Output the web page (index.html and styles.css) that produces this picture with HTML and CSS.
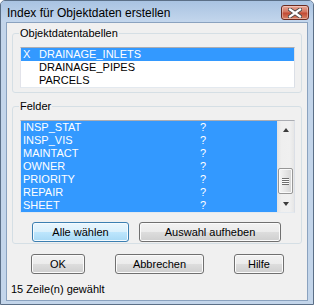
FILE: index.html
```html
<!DOCTYPE html>
<html>
<head>
<meta charset="utf-8">
<title>Index für Objektdaten erstellen</title>
<link rel="stylesheet" href="styles.css">
</head>
<body>
<div class="window">
	<div class="titlebar">
		<span class="title">Index für Objektdaten erstellen</span>
		<span class="close">
			<svg width="14" height="10" viewBox="0 0 14 10">
				<path d="M2 1.5 L12 8.5 M12 1.5 L2 8.5" stroke="#4a4a4a" stroke-width="4" stroke-linecap="square"/>
				<path d="M2 1.5 L12 8.5 M12 1.5 L2 8.5" stroke="#fff" stroke-width="2.2" stroke-linecap="square"/>
			</svg>
		</span>
	</div>
	<div class="client">
		<fieldset class="group">
			<legend>Objektdatentabellen</legend>
			<ul class="listbox tables">
				<li class="selected"><span class="mark">X</span>DRAINAGE_INLETS</li>
				<li><span class="mark"></span>DRAINAGE_PIPES</li>
				<li><span class="mark"></span>PARCELS</li>
			</ul>
		</fieldset>

		<fieldset class="group fields">
			<legend>Felder</legend>
			<div class="listbox field-box">
				<ul class="field-list">
					<li class="selected"><span class="name">INSP_STAT</span><span>?</span></li>
					<li class="selected"><span class="name">INSP_VIS</span><span>?</span></li>
					<li class="selected"><span class="name">MAINTACT</span><span>?</span></li>
					<li class="selected"><span class="name">OWNER</span><span>?</span></li>
					<li class="selected"><span class="name">PRIORITY</span><span>?</span></li>
					<li class="selected"><span class="name">REPAIR</span><span>?</span></li>
					<li class="selected"><span class="name">SHEET</span><span>?</span></li>
				</ul>
				<div class="scrollbar">
					<div class="sb-btn up"></div>
					<div class="sb-track"><div class="sb-thumb" style="margin-top:30px"><span class="grip"></span></div></div>
					<div class="sb-btn down"></div>
				</div>
			</div>
			<div class="group-buttons">
				<button class="btn focus select-all">Alle wählen</button>
				<button class="btn clear-all">Auswahl aufheben</button>
			</div>
		</fieldset>

		<div class="dialog-buttons">
			<button class="btn ok">OK</button>
			<button class="btn cancel">Abbrechen</button>
			<button class="btn help">Hilfe</button>
		</div>
		<div class="status">15 Zeile(n) gewählt</div>
	</div>
</div>
</body>
</html>
```

FILE: styles.css
```css
body{
margin:0;
font-family:"Liberation Sans", Arial, sans-serif;
font-size:11px;
color:#000;
background:#fff;
}
.window{
width:314px;
height:305px;
box-sizing:border-box;
border:1px solid #5b6f87;
border-radius:5px 5px 0 0;
background:#c3d5ea;
overflow:hidden;
}
.titlebar{
height:21px;
display:flex;
justify-content:space-between;
align-items:flex-start;
background:linear-gradient(#a9c3e2, #c3d6ec);
}
.title{
font-size:12px;
line-height:14px;
padding:5px 0 0 6px;
white-space:nowrap;
}
.close{
box-sizing:border-box;
width:28px;
height:15px;
margin:4px 4px 0 0;
display:flex;
align-items:center;
justify-content:center;
border:1px solid #6b2b20;
border-radius:3px;
background:linear-gradient(#e9a899, #d3755f 45%, #c24a33 55%, #d88266);
box-shadow:inset 0 0 0 1px rgba(255,255,255,0.35);
}
.client{
height:279px;
margin:0 5px;
box-sizing:border-box;
border:1px solid #8aa2bf;
background:#f0f0f0;
}
.group{
margin:4px 5px 0;
padding:7px 6px 4px 7px;
border:1px solid #d5dfe5;
border-radius:3px;
min-width:0;
}
.group legend{
padding:0 1px;
margin-left:-1px;
line-height:13px;
}
.fields{
margin-top:7px;
padding-bottom:1px;
}
.listbox{
margin:0;
padding:0;
list-style:none;
background:#fff;
border:1px solid #e3e9ef;
border-top-color:#abadb3;
border-left-color:#e2e3ea;
border-right-color:#dbdfe6;
}
.listbox li,
.field-list li{
height:13px;
line-height:13px;
padding-left:2px;
display:flex;
white-space:nowrap;
}
.selected{
background:#3399ff;
color:#fff;
}
.mark{
width:16px;
}
.field-box{
display:flex;
}
.field-list{
flex:1;
margin:0;
padding:0;
list-style:none;
}
.field-list .name{
width:177px;
}
.scrollbar{
width:17px;
display:flex;
flex-direction:column;
background:linear-gradient(to right, #e2e2e2, #efefef 25%, #f0f0f0 75%, #e6e6e6);
}
.sb-btn{
height:17px;
display:flex;
align-items:center;
justify-content:center;
}
.sb-btn.up::before{
content:"";
border-left:3.5px solid transparent;
border-right:3.5px solid transparent;
border-bottom:4px solid #3c3c3c;
}
.sb-btn.down::before{
content:"";
border-left:3.5px solid transparent;
border-right:3.5px solid transparent;
border-top:4px solid #3c3c3c;
}
.sb-track{
flex:1;
}
.sb-thumb{
box-sizing:border-box;
height:26px;
margin:0 1px;
display:flex;
align-items:center;
justify-content:center;
border:1px solid #979797;
border-radius:2px;
background:linear-gradient(to right, #f5f5f5, #e6e6e6 50%, #d4d4d4);
box-shadow:inset 0 0 0 1px #fafafa;
}
.grip{
width:7px;
height:7px;
background:repeating-linear-gradient(#6e6e6e 0 1px, #fdfdfd 1px 2px);
}
.btn{
box-sizing:border-box;
height:20px;
padding:0;
font-family:inherit;
font-size:11px;
color:#000;
border:1px solid #707070;
border-radius:3px;
background:linear-gradient(#f2f2f2, #ebebeb 50%, #dddddd 50%, #cfcfcf);
box-shadow:inset 0 0 0 1px #fbfbfb;
}
.btn.focus{
border-color:#3c7fb1;
background:linear-gradient(#eaf6fd, #d9f0fc 50%, #bee6fd 50%, #a7d9f5);
box-shadow:inset 0 0 0 1px #f4fbff;
}
.group-buttons{
display:flex;
gap:10px;
margin-top:9px;
padding-left:12px;
}
.select-all{
width:97px;
}
.clear-all{
width:142px;
}
.dialog-buttons{
display:flex;
gap:30px;
margin-top:10px;
padding-left:24px;
}
.ok{
width:54px;
}
.cancel{
width:89px;
}
.help{
width:50px;
}
.status{
margin:9px 0 0 4px;
line-height:13px;
}
```
